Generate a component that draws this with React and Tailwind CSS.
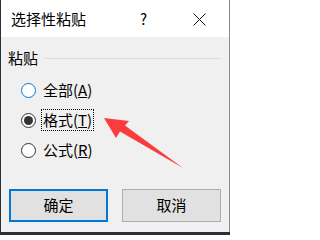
import React from "react";

const font = { fontFamily: '"Microsoft YaHei", "Noto Sans CJK SC", "Noto Sans", sans-serif' };

function Radio({ label, hot, checked, focused, top }) {
  return (
    <div className="h-[30px] flex items-center pl-[20px]">
      <span
        className={`w-[15px] h-[15px] rounded-full border bg-white flex items-center justify-center ${
          hot ? "border-[#0078d7]" : "border-[#333333]"
        }`}
      >
        {checked && <span className="w-[9px] h-[9px] rounded-full bg-[#333333]" />}
      </span>
      <span
        className={`ml-[5px] px-[1px] leading-[20px] text-[15px] text-black border border-dotted ${
          focused ? "border-black" : "border-transparent"
        }`}
      >
        {label}
      </span>
    </div>
  );
}

export default function App() {
  return (
    <div className="w-[230px] h-[235px] bg-[#2a2f38] overflow-hidden" style={font}>
      <div className="relative ml-[1px] w-[229px] h-[232px] bg-[#f0f0f0] border-r border-[#8a8a8a] flex flex-col">
        {/* title bar */}
        <div className="h-[37px] bg-white flex items-center pl-[10px] pr-[23px] shrink-0">
          <span className="text-[15px] text-black leading-none">选择性粘贴</span>
          <span className="ml-auto text-[15px] text-black leading-none mr-[46px]">?</span>
          <svg width="13" height="13" viewBox="0 0 13 13" className="mt-[1px]">
            <path d="M0.5 0.5 L12.5 12.5 M12.5 0.5 L0.5 12.5" stroke="#111" strokeWidth="1" />
          </svg>
        </div>

        {/* group header */}
        <div className="mt-[12px] h-[16px] flex items-center pl-[7px] pr-[8px]">
          <span className="text-[15px] leading-none text-black">粘贴</span>
          <span className="flex-1 h-px bg-[#dcdcdc] ml-[6px] mt-[2px]" />
        </div>

        {/* options */}
        <div className="mt-[10px] flex flex-col">
          <Radio label={<>全部(<u>A</u>)</>} hot />
          <Radio label={<>格式(<u>T</u>)</>} checked focused />
          <Radio label={<>公式(<u>R</u>)</>} />
        </div>

        {/* buttons */}
        <div className="mt-[24px] grid grid-cols-2 gap-[14px] pl-[8px] pr-[8px]">
          <button className="h-[33px] bg-[#e1e1e1] border-2 border-[#0078d7] text-[15px] text-black">
            确定
          </button>
          <button className="h-[33px] bg-[#e1e1e1] border border-[#adadad] text-[15px] text-black">
            取消
          </button>
        </div>

        {/* annotation arrow */}
        <svg className="absolute left-0 top-0 pointer-events-none" width="229" height="232" viewBox="-1 0 229 232">
          <polygon
            points="102,118 127,121 123,125.5 181,168 118,131.5 114,138"
            fill="#fa3c3c"
          />
        </svg>
      </div>
    </div>
  );
}
